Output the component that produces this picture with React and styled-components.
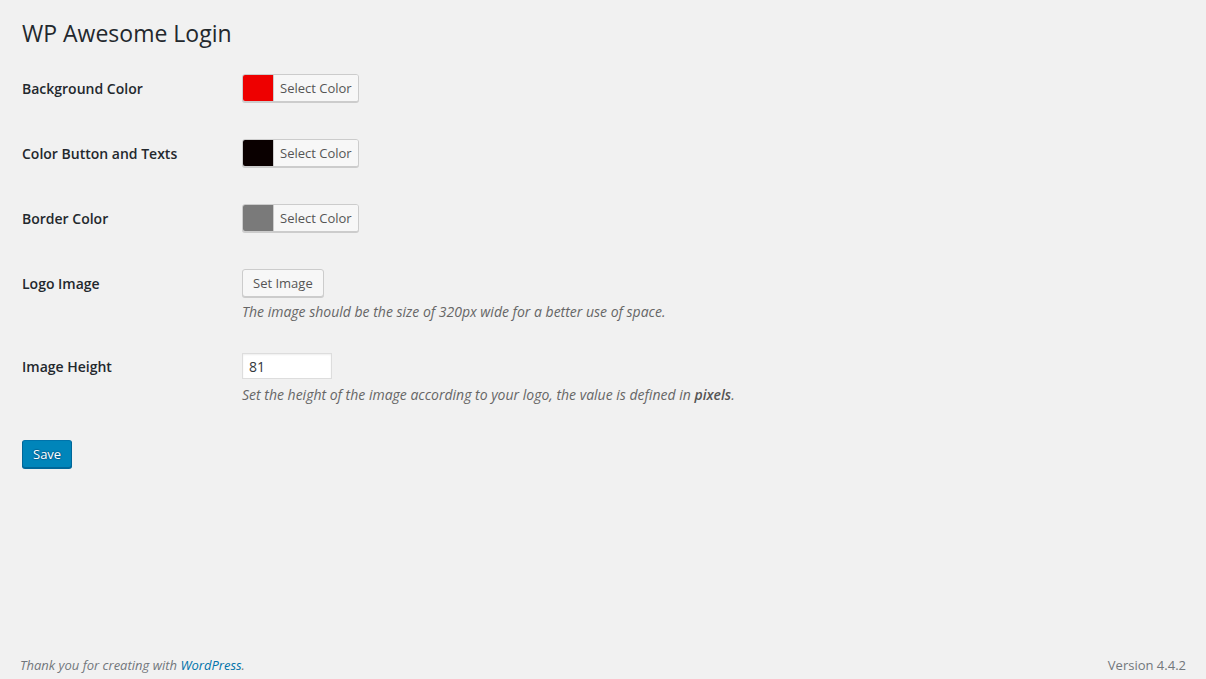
import React from "react";
import styled, { createGlobalStyle } from "styled-components";

const GlobalStyle = createGlobalStyle`
  html, body { margin: 0; padding: 0; }
  body {
    background: #f1f1f1;
    color: #444;
    font-family: "Open Sans", "Noto Sans", sans-serif;
    font-size: 13px;
    line-height: 1.4em;
  }
  * { box-sizing: border-box; }
`;

const Page = styled.div`
  min-height: 100vh;
  display: flex;
  flex-direction: column;
`;

const Wrap = styled.div`
  flex: 1;
  margin: 10px 20px 0 22px;
`;

const Title = styled.h1`
  margin: 0;
  padding: 9px 15px 4px 0;
  font-size: 23px;
  font-weight: 400;
  line-height: 29px;
  color: #23282d;
`;

const FormTable = styled.div`
  margin-top: 6px;
  display: flex;
  flex-direction: column;
`;

const Row = styled.div`
  display: grid;
  grid-template-columns: 220px 1fr;
  min-height: ${(p) => p.$h || 0}px;
`;

const Label = styled.div`
  padding-top: 21px;
  font-size: 14px;
  font-weight: 600;
  line-height: 19px;
  color: #23282d;
`;

const Field = styled.div`
  padding-top: ${(p) => p.$top || 16}px;
  display: flex;
  flex-direction: column;
  align-items: flex-start;
`;

const ColorButton = styled.button`
  display: inline-flex;
  align-items: stretch;
  height: 28px;
  padding: 0;
  border: 1px solid #ccc;
  border-radius: 3px;
  box-shadow: 0 1px 0 #ccc;
  background: #f7f7f7;
  overflow: hidden;
  cursor: pointer;
  font-family: inherit;
`;

const Swatch = styled.span`
  width: 30px;
  background: ${(p) => p.$color};
`;

const SwatchText = styled.span`
  padding: 0 6px 0 6px;
  border-left: 1px solid #ccc;
  background: #f7f7f7;
  color: #555;
  font-size: 13px;
  line-height: 26px;
`;

const Button = styled.button`
  display: inline-flex;
  align-items: center;
  height: 28px;
  padding: 0 10px 1px;
  border: 1px solid #ccc;
  border-radius: 3px;
  background: #f7f7f7;
  box-shadow: 0 1px 0 #ccc;
  color: #555;
  font-family: inherit;
  font-size: 13px;
  line-height: 26px;
  cursor: pointer;
`;

const PrimaryButton = styled(Button)`
  background: #0085ba;
  border-color: #0073aa #006799 #006799;
  box-shadow: 0 1px 0 #006799;
  color: #fff;
  text-shadow: 0 -1px 1px #006799, 1px 0 1px #006799, 0 1px 1px #006799, -1px 0 1px #006799;
`;

const Description = styled.p`
  margin: ${(p) => p.$mt || 5}px 0 0;
  font-size: 14px;
  font-style: italic;
  line-height: 20px;
  color: #666;

  strong { font-weight: 600; color: #555; }
`;

const TextInput = styled.input`
  width: 90px;
  height: 26px;
  padding: 3px 6px;
  border: 1px solid #ddd;
  box-shadow: inset 0 1px 2px rgba(0, 0, 0, 0.07);
  background: #fff;
  color: #32373c;
  font-family: inherit;
  font-size: 14px;
  outline: none;
`;

const Submit = styled.div`
  margin-top: 35px;
`;

const Footer = styled.footer`
  display: flex;
  justify-content: space-between;
  padding: 0 20px 4px;
  font-size: 13px;
  line-height: 20px;
  color: #777;
`;

const FooterLeft = styled.span`
  font-style: italic;
  color: #72777c;

  a { color: #0073aa; text-decoration: none; }
`;

const FooterRight = styled.span`
  color: #72777c;
`;

function ColorPicker({ color }) {
  return (
    <ColorButton type="button">
      <Swatch $color={color} />
      <SwatchText>Select Color</SwatchText>
    </ColorButton>
  );
}

export default function App() {
  return (
    <Page>
      <GlobalStyle />
      <Wrap>
        <Title>WP Awesome Login</Title>
        <FormTable>
          <Row $h={65}>
            <Label>Background Color</Label>
            <Field><ColorPicker color="#ee0000" /></Field>
          </Row>
          <Row $h={65}>
            <Label>Color Button and Texts</Label>
            <Field><ColorPicker color="#0a0000" /></Field>
          </Row>
          <Row $h={65}>
            <Label>Border Color</Label>
            <Field><ColorPicker color="#7a7a7a" /></Field>
          </Row>
          <Row $h={83}>
            <Label>Logo Image</Label>
            <Field>
              <Button type="button">Set Image</Button>
              <Description>The image should be the size of 320px wide for a better use of space.</Description>
            </Field>
          </Row>
          <Row>
            <Label>Image Height</Label>
            <Field $top={17}>
              <TextInput type="text" defaultValue="81" />
              <Description $mt={6}>
                Set the height of the image according to your logo, the value is defined in <strong>pixels</strong>.
              </Description>
            </Field>
          </Row>
        </FormTable>
        <Submit>
          <PrimaryButton type="button">Save</PrimaryButton>
        </Submit>
      </Wrap>
      <Footer>
        <FooterLeft>
          Thank you for creating with <a href="#">WordPress</a>.
        </FooterLeft>
        <FooterRight>Version 4.4.2</FooterRight>
      </Footer>
    </Page>
  );
}
